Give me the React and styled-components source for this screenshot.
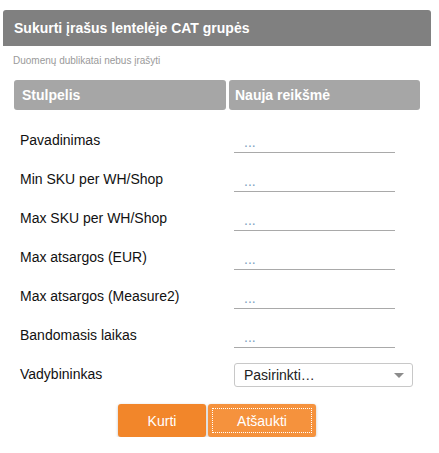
import React from 'react'
import styled, { createGlobalStyle } from 'styled-components'

const GlobalStyle = createGlobalStyle`
    body{
        margin: 0;
        background: #ffffff;
        font-family: "Liberation Sans", Arial, sans-serif;
    }
`

const Dialog = styled.div`
    width: 428px;
    margin: 10px 0 0 3px;
`

const TitleBar = styled.div`
    height: 36px;
    background-color: #808080;
    border-radius: 3px 3px 0 0;
    color: #fff;
    font-size: 14px;
    font-weight: bold;
    display: flex;
    align-items: center;
    padding-left: 11px;
`

const Note = styled.div`
    font-size: 10px;
    color: #9a9a9a;
    padding: 9px 0 0 10px;
    height: 15px;
`

const HeadRow = styled.div`
    display: grid;
    grid-template-columns: 212px 191px;
    gap: 3px;
    margin: 10px 0 0 11px;
`

const HeadCell = styled.div`
    height: 30px;
    background-color: #a6a6a6;
    border-radius: 3px;
    color: #fff;
    font-size: 14px;
    font-weight: bold;
    display: flex;
    align-items: center;
    padding-left: ${p => p.$pad}px;
`

const Rows = styled.div`
    margin-top: 10px;
`

const Row = styled.div`
    height: 39px;
    display: grid;
    grid-template-columns: 214px 1fr;
    align-items: center;
    padding-left: 17px;
`

const Label = styled.div`
    font-size: 14px;
    color: #111;
    padding-top: 1px;
`

const Field = styled.input`
    width: 161px;
    height: 26px;
    box-sizing: border-box;
    border: none;
    border-bottom: 1px solid #a9a9a9;
    padding: 4px 0 0 10px;
    font-family: inherit;
    font-size: 14px;
    outline: none;
    background: transparent;
    margin-top: 1px;

    &::placeholder{
        color: #7f9fbf;
    }
`

const Select = styled.div`
    width: 179px;
    height: 24px;
    box-sizing: border-box;
    border: 1px solid #c8c8c8;
    border-radius: 3px;
    display: flex;
    align-items: center;
    justify-content: space-between;
    padding: 0 8px 0 9px;
    font-size: 14px;
    color: #222;
    margin-top: 3px;
`

const Caret = styled.span`
    width: 0;
    height: 0;
    border-left: 5px solid transparent;
    border-right: 5px solid transparent;
    border-top: 5px solid #8c8c8c;
`

const Actions = styled.div`
    display: flex;
    justify-content: center;
    gap: 2px;
    margin-top: 11px;
`

const Button = styled.button`
    width: ${p => p.$w}px;
    height: 33px;
    border: none;
    border-radius: 3px;
    background-color: ${p => p.$focus ? '#f5923d' : '#f2862a'};
    color: #fff;
    font-family: inherit;
    font-size: 14px;
    box-shadow: 0 1px 3px rgba(0,0,0,0.25);
    position: relative;
    cursor: pointer;

    ${p => p.$focus && `
        &::after{
            content: '';
            position: absolute;
            inset: 4px;
            border: 1px dotted #fff;
        }
    `}
`

const fields = [
    'Pavadinimas',
    'Min SKU per WH/Shop',
    'Max SKU per WH/Shop',
    'Max atsargos (EUR)',
    'Max atsargos (Measure2)',
    'Bandomasis laikas',
]

export default function App() {
  return (
    <>
      <GlobalStyle />
      <Dialog>
        <TitleBar>Sukurti įrašus lentelėje CAT grupės</TitleBar>
        <Note>Duomenų dublikatai nebus įrašyti</Note>
        <HeadRow>
          <HeadCell $pad={8}>Stulpelis</HeadCell>
          <HeadCell $pad={6}>Nauja reikšmė</HeadCell>
        </HeadRow>
        <Rows>
          {fields.map(f => (
            <Row key={f}>
              <Label>{f}</Label>
              <Field placeholder="..." />
            </Row>
          ))}
          <Row>
            <Label>Vadybininkas</Label>
            <Select>
              <span>Pasirinkti…</span>
              <Caret />
            </Select>
          </Row>
        </Rows>
        <Actions>
          <Button $w={88}>Kurti</Button>
          <Button $w={108} $focus>Atšaukti</Button>
        </Actions>
      </Dialog>
    </>
  )
}
